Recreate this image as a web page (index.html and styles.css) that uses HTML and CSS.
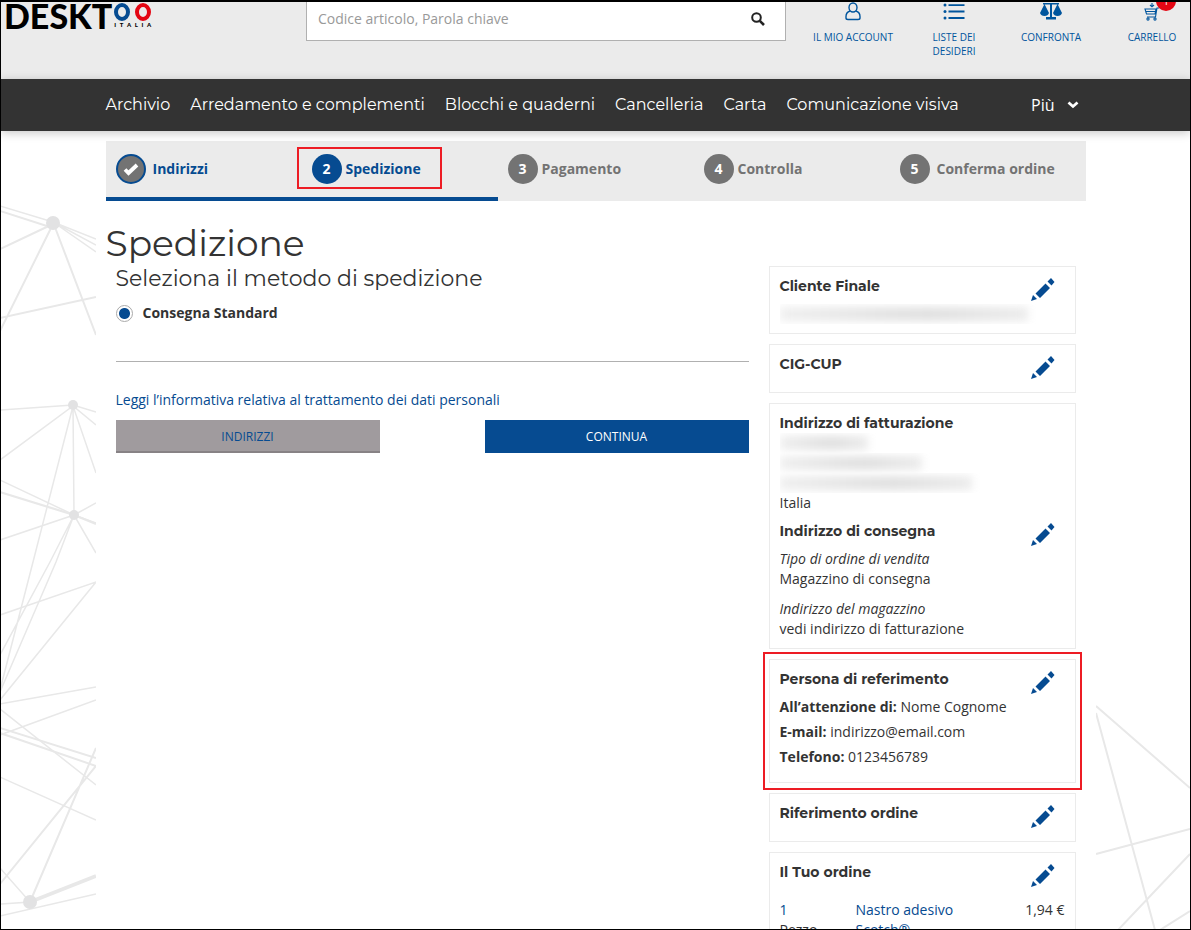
FILE: index.html
```html
<!DOCTYPE html>
<html lang="it">
<head>
<meta charset="utf-8">
<meta name="viewport" content="width=device-width, initial-scale=1">
<title>Spedizione</title>
<link rel="stylesheet" href="styles.css">
</head>
<body>
<svg class="defs" aria-hidden="true">
  <symbol id="pencil" viewBox="0 0 24 24">
    <path d="M0 23 2 17 6 21zM4.500 15.500 14.500 5.500 19 10 9 20zM16.500 3.500 20 0 23.500 4 20.500 7.500z"/>
  </symbol>
</svg>
<div class="frame">
  <header class="top">
    <a class="logo" href="#"><span class="logo-name">DESKT</span><span class="logo-end"><span class="rings"><i class="ring blue"></i><i class="ring red"></i></span><span class="logo-sub"><b>I</b><b>T</b><b>A</b><b>L</b><b>I</b><b>A</b></span></span></a>
    <form class="search">
      <input type="text" aria-label="Cerca" placeholder="Codice articolo, Parola chiave">
      <button type="button" aria-label="Cerca"><svg width="14" height="14" viewBox="0 0 14 14"><circle cx="5.500" cy="5.500" r="4.300" fill="none" stroke="#222" stroke-width="2"/><path d="M8.800 8.800 13 13" stroke="#222" stroke-width="2.600"/></svg></button>
    </form>
    <nav class="tools" aria-label="Account">
      <a href="#"><svg width="16" height="19" viewBox="0 0 16 19" fill="none" stroke="#00559d" stroke-width="1.400"><ellipse cx="8" cy="5.500" rx="4" ry="4.500"/><path d="M5 9C2 10 1 12 1 14.500V16q0 1.500 2 1.500h10q2 0 2-1.500V14.500C15 12 14 10 11 9"/></svg>IL MIO ACCOUNT</a>
      <a href="#"><svg width="22" height="19" viewBox="0 0 22 19" fill="#00559d"><circle cx="2" cy="3" r="1.500"/><circle cx="2" cy="9.500" r="1.500"/><circle cx="2" cy="16" r="1.500"/><path d="M5.500 2.200h16v1.800h-16zM5.500 8.600h16v1.800h-16zM5.500 15.100h16v1.800h-16z"/></svg>LISTE DEI DESIDERI</a>
      <a href="#"><svg width="22" height="19" viewBox="0 0 22 19" fill="#00559d"><path d="M10 1h2v14h4v2.500H6V15h4zM3 1h16v1.600H3zM4.500 2 9 11q-1 3-4.500 3T0 11zM17.500 2 22 11q-1 3-4.500 3T13 11z"/></svg>CONFRONTA</a>
      <a href="#"><svg width="16" height="19" viewBox="0 0 16 19" fill="none" stroke="#00559d" stroke-width="1.100"><path d="M8 1v3.500M6 3 8 4.800 10 3M1 7h11l-1 5H2.500zM2 9.500h9.500M15 6h-2L11.500 15H3"/><circle cx="4" cy="17" r="1.100"/><circle cx="11" cy="17" r="1.100"/></svg><span class="badge">1</span>CARRELLO</a>
    </nav>
  </header>
  <nav class="menu" aria-label="Categorie">
    <div class="menu-in">
      <a href="#">Archivio</a><a href="#">Arredamento e complementi</a><a href="#">Blocchi e quaderni</a><a href="#">Cancelleria</a><a href="#">Carta</a><a href="#">Comunicazione visiva</a>
      <button type="button" class="more">Più<svg width="12" height="8" viewBox="0 0 12 8"><path d="M1.500 1.500 6 5.500 10.500 1.500" fill="none" stroke="#fff" stroke-width="2.800"/></svg></button>
    </div>
  </nav>
  <div class="stage">
    <svg class="net left" viewBox="1 131 95 799" preserveAspectRatio="xMinYMin meet" aria-hidden="true">
      <g stroke-width="1.500"><path d="M0 206 53 222 96 239M53 222 96 252M53 222 96 245" /><path d="M0 211 50 227M0 249 53 224M53 224 0 331M53 222 96 335M0 318 96 297" stroke-width="2"/>
      <path d="M0 410 73 405 96 412M0 460 73 406 96 425M73 406 96 473M73 406 33 562 0 690M73 406 74 515M0 480 74 515 96 523M0 540 74 515 96 503M74 515 96 553M74 515 50 562 0 655M74 515 56 562 0 692"/><path d="M0 492 74 515 96 524" stroke-width="2.200"/>
      <path d="M0 615 96 582 0 700M0 704 96 687M0 735 96 700M0 709 96 785M0 777 96 820"/><path d="M0 728 96 758M0 733 96 766M96 748 30 902M96 766 0 884" stroke-width="2"/><path d="M0 868 30 902 0 904M0 916 96 894"/><path d="M30 902 96 876" stroke-width="3.500"/></g>
      <g class="nodes"><circle cx="53" cy="223" r="7"/><circle cx="73" cy="405" r="5"/><circle cx="74" cy="515" r="5"/><circle cx="30" cy="902" r="7"/></g>
    </svg>
    <svg class="net right" viewBox="1096 131 94 799" preserveAspectRatio="xMaxYMin meet" aria-hidden="true">
      <path d="M1096 706 1190 788M1096 713 1155 930M1096 854 1190 829M1190 854 1118 930M1190 911 1160 930" stroke-width="2"/>
    </svg>
    <main class="page">
      <ol class="steps">
        <li class="done wide"><span class="num"><svg width="16" height="14" viewBox="0 0 16 14"><path d="M2 7.500 5.500 11 14 3" fill="none" stroke="#fff" stroke-width="3.800"/></svg></span>Indirizzi</li>
        <li class="current"><span class="num">2</span>Spedizione<span class="mark" aria-hidden="true"></span></li>
        <li><span class="num">3</span>Pagamento</li>
        <li><span class="num">4</span>Controlla</li>
        <li class="wide"><span class="num">5</span>Conferma ordine</li>
      </ol>
      <h1>Spedizione</h1>
      <div class="cols">
        <section class="method">
          <h2>Seleziona il metodo di spedizione</h2>
          <label class="option"><input type="radio" name="metodo" checked>Consegna Standard</label>
          <hr>
          <a class="privacy" href="#">Leggi l’informativa relativa al trattamento dei dati personali</a>
          <div class="actions">
            <button type="button" class="btn back">INDIRIZZI</button>
            <button type="button" class="btn next">CONTINUA</button>
          </div>
        </section>
        <aside class="cards">
          <section class="card">
            <div class="head"><h3>Cliente Finale</h3><button type="button" aria-label="Modifica cliente"><svg><use href="#pencil"/></svg></button></div>
            <div class="veil"><i class="w-full"></i></div>
          </section>
          <section class="card">
            <div class="head"><h3>CIG-CUP</h3><button type="button" aria-label="Modifica CIG-CUP"><svg><use href="#pencil"/></svg></button></div>
          </section>
          <section class="card">
            <h3>Indirizzo di fatturazione</h3>
            <div class="veil"><i class="w-s"></i></div>
            <div class="veil"><i class="w-m"></i></div>
            <div class="veil"><i class="w-l"></i></div>
            <p class="country">Italia</p>
            <div class="head"><h3>Indirizzo di consegna</h3><button type="button" aria-label="Modifica indirizzo"><svg><use href="#pencil"/></svg></button></div>
            <p class="kind"><em>Tipo di ordine di vendita</em><br>Magazzino di consegna</p>
            <p><em>Indirizzo del magazzino</em><br>vedi indirizzo di fatturazione</p>
          </section>
          <section class="card contact">
            <div class="head"><h3>Persona di referimento</h3><button type="button" aria-label="Modifica persona"><svg><use href="#pencil"/></svg></button></div>
            <p><b>All’attenzione di:</b> Nome Cognome</p>
            <p><b>E-mail:</b> indirizzo@email.com</p>
            <p><b>Telefono:</b> 0123456789</p>
            <span class="mark" aria-hidden="true"></span>
          </section>
          <section class="card">
            <div class="head"><h3>Riferimento ordine</h3><button type="button" aria-label="Modifica riferimento"><svg><use href="#pencil"/></svg></button></div>
          </section>
          <section class="card">
            <div class="head"><h3>Il Tuo ordine</h3><button type="button" aria-label="Modifica ordine"><svg><use href="#pencil"/></svg></button></div>
            <table class="order"><tbody><tr><td class="qty"><span>1</span><br>Pezzo</td><td class="item"><a href="#">Nastro adesivo Scotch®</a></td><td class="price">1,94 €</td></tr></tbody></table>
          </section>
        </aside>
      </div>
    </main>
  </div>
</div>
</body>
</html>
```
FILE: styles.css
```css
* { box-sizing: border-box; }
body { margin: 0; color: #333; font: 14px/20px "Open Sans", sans-serif; }
h1, h2, h3, p, ol { margin: 0; padding: 0; }
a { color: #064b91; text-decoration: none; }
button { margin: 0; padding: 0; border: 0; background: none; font: inherit; cursor: pointer; }
.defs { position: absolute; width: 0; height: 0; }
.frame { height: 100vh; overflow: hidden; border: 1px solid #000; border-top-width: 2px; display: flex; flex-direction: column; background: #fff; }

.top { flex: none; height: 77px; overflow: hidden; display: grid; grid-template-columns: 305px minmax(0, 480px) minmax(360px, 1fr); align-items: start; background: #ebebeb; }
.logo { display: flex; padding-left: 3px; color: #000; }
.logo-name { font: 900 34px/28px Lato, sans-serif; }
.logo-end { padding: 1px 0 0 2px; }
.rings { display: flex; gap: 5px; }
.ring { width: 16px; height: 18px; border: 4px solid #064b91; border-radius: 50%; }
.ring.red { border-color: #e30613; }
.logo-sub { display: flex; justify-content: space-between; font: 6px/8px Lato, sans-serif; }
.logo-sub b { font-weight: 900; }
.search { display: flex; height: 39px; border: 1px solid #b0b0b0; border-top: 0; background: #fff; }
.search input { flex: 1; min-width: 0; padding: 0 11px 5px; border: 0; background: none; font: inherit; outline: 0; }
.search input::placeholder { color: #999; opacity: 1; }
.search button { width: 54px; padding-bottom: 5px; display: grid; place-items: center; }
.tools { display: grid; grid-template-columns: 134fr 68fr 126fr 76fr; font-size: 10px; line-height: 14px; text-align: center; }
.tools a { position: relative; display: flex; flex-direction: column; align-items: center; gap: 9px; color: #00559d; }
.badge { position: absolute; left: 42px; top: -11px; width: 20px; height: 20px; border-radius: 50%; background: #e30613; color: #fff; line-height: 20px; }

.menu { flex: none; position: relative; z-index: 2; background: #333; box-shadow: 0 2px 9px rgba(0, 0, 0, .22); }
.menu-in { display: flex; align-items: center; gap: 20px; height: 52px; max-width: 980px; margin: 0 auto; font: 16px/24px Montserrat, Inter, sans-serif; }
.menu a { color: #fff; white-space: nowrap; }
.more { margin: 0 7px 0 auto; display: flex; align-items: center; gap: 12px; color: #fff; font: 16px/24px "Open Sans", sans-serif; }

.stage { flex: 1; min-height: 0; position: relative; }
.net { position: absolute; top: 0; width: 95px; height: 799px; fill: none; stroke: #e8e8e8; }
.net .nodes { fill: #e2e2e3; stroke: none; }
.left { left: 0; }
.right { right: 0; }
.page { position: relative; max-width: 1000px; min-height: 100%; margin: 0 auto; padding: 10px; background: #fff; }

.steps { display: grid; grid-template-columns: repeat(5, 1fr); list-style: none; background: #ebebeb; color: #737373; font-weight: 700; }
.steps li { position: relative; display: flex; align-items: center; gap: 4px; height: 60px; padding: 0 10px; border-bottom: 4px solid #ebebeb; }
.steps li.wide { gap: 7px; }
.steps .done, .steps .current { border-color: #064b91; color: #064b91; }
.num { width: 30px; height: 30px; border-radius: 50%; display: grid; place-items: center; background: #737373; color: #fff; }
.current .num { background: #064b91; }
.done .num { border: 2px solid #064b91; }
.mark { position: absolute; border: 2px solid #ed1c24; pointer-events: none; }
.steps .mark { left: -5px; top: 6px; width: 145px; height: 42px; }

h1 { margin-top: 20px; font: 400 36px/45px Montserrat, Inter, sans-serif; }
.cols { display: grid; grid-template-columns: minmax(0, 1fr) 307px; gap: 20px; padding: 0 10px; }
h2 { font: 400 22px/26px Montserrat, Inter, sans-serif; }
.option { display: flex; align-items: center; gap: 10px; margin-top: 11px; font-weight: 700; }
.option input { appearance: none; width: 17px; height: 17px; margin: 0; border: 1px solid #aaa; border-radius: 50%; background: radial-gradient(circle, #064b91 5px, #fff 6px); }
hr { margin: 38px 0 28px; border: 0; border-top: 1px solid #b0b0b0; }
.actions { display: flex; justify-content: space-between; margin-top: 10px; }
.btn { width: 264px; height: 33px; font-size: 12px; }
.back { padding-top: 2px; background: #a09b9e; border-bottom: 2px solid #878285; color: #064b91; }
.next { background: #064b91; color: #fff; }

.cards { display: flex; flex-direction: column; gap: 10px; }
.card { position: relative; min-height: 49px; padding: 9px 10px; border: 1px solid #ebebeb; }
.head { display: flex; justify-content: space-between; height: 28px; padding-right: 10px; }
.head button { margin-top: 2px; width: 24px; height: 24px; }
.head svg { display: block; width: 24px; height: 24px; fill: #064b91; }
h3 { font: 700 14px/20px Montserrat, Inter, sans-serif; }
.veil { height: 20px; padding: 3px 0; overflow: hidden; }
.veil i { display: block; height: 14px; background: linear-gradient(90deg, #efefef, #e4e4e4 40%, #e0e0e0 60%, #ececec); filter: blur(4px); }
.w-full { width: 248px; }
.w-s { width: 88px; }
.w-m { width: 142px; }
.w-l { width: 192px; }
.country { margin-bottom: 8px; }
.kind { margin-bottom: 10px; }
.contact { padding-bottom: 10px; }
.contact p { margin-bottom: 5px; }
.contact .mark { inset: -8px -7px; }
.order { width: 100%; margin-top: 10px; border-collapse: collapse; }
.order td { padding: 0; vertical-align: top; }
.qty { width: 76px; }
.qty span { color: #064b91; }
.item { width: 110px; }
.price { text-align: right; }
```
